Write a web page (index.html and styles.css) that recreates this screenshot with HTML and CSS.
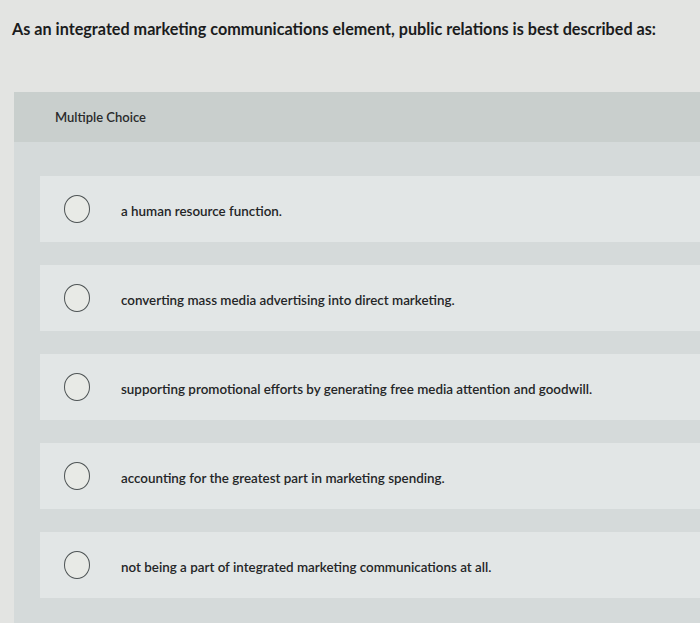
FILE: index.html
```html
<!DOCTYPE html>
<html lang="en">
<head>
<meta charset="utf-8">
<title>Question</title>
<link rel="stylesheet" href="styles.css">
</head>
<body>
  <h1 class="question">As an integrated marketing communications element, public relations is best described as:</h1>
  <section class="panel">
    <div class="panel-head">Multiple Choice</div>
    <ul class="options">
      <li class="option"><span class="radio"></span><span class="label">a human resource function.</span></li>
      <li class="option"><span class="radio"></span><span class="label">converting mass media advertising into direct marketing.</span></li>
      <li class="option"><span class="radio"></span><span class="label">supporting promotional efforts by generating free media attention and goodwill.</span></li>
      <li class="option"><span class="radio"></span><span class="label">accounting for the greatest part in marketing spending.</span></li>
      <li class="option"><span class="radio"></span><span class="label">not being a part of integrated marketing communications at all.</span></li>
    </ul>
  </section>
</body>
</html>
```
FILE: styles.css
```css
html, body {
  margin: 0;
  padding: 0;
}
body {
  background: #e3e4e2;
  font-family: Lato, "Liberation Sans", sans-serif;
  color: #1e1f20;
  width: 700px;
  height: 623px;
  overflow: hidden;
}
.question {
  margin: 0;
  padding: 17px 0 0 12px;
  height: 76px;
  box-sizing: border-box;
  font-size: 16.2px;
  font-weight: 700;
  line-height: 24px;
  color: #1b1c1d;
}
.panel {
  margin: 16px 0 0 14px;
  background: #d5dada;
  height: 531px;
  overflow: hidden;
}
.panel-head {
  background: #c9cfcd;
  height: 50px;
  display: flex;
  align-items: center;
  padding-left: 41px;
  font-size: 13px;
  font-weight: 600;
  color: #2a2b2c;
}
.options {
  list-style: none;
  margin: 0;
  padding: 34px 0 0 26px;
}
.option {
  height: 66px;
  margin-bottom: 23px;
  background: #e2e6e6;
  display: flex;
  align-items: center;
  padding-left: 24px;
}
.radio {
  width: 24px;
  height: 26px;
  border: 1.6px solid #4e5455;
  border-radius: 50%;
  flex: none;
  background: #e8eae6;
}
.label {
  margin-left: 31px;
  padding-top: 4px;
  font-size: 13.4px;
  font-weight: 600;
  color: #242526;
}
```
